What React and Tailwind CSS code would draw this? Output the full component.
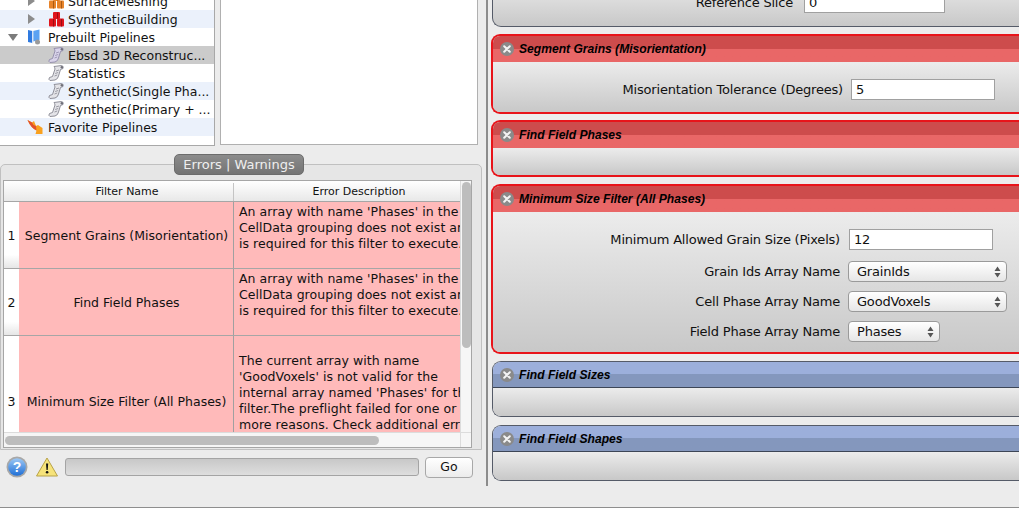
import React from 'react';

const ScrollIcon = ({ tint = '#e4e4e8', edge = '#85858f' }) => (
  <svg width="17" height="16" viewBox="0 0 17 16" className="shrink-0">
    <path d="M6 1.5 L13.5 0.5 Q16 1 15 3.5 L12.5 4.5 L10.5 11 Q10 14 7 15 L2 15.5 Q0 14.5 1.5 12.5 L4.5 11.5 L7 4 Q6.8 2.5 6 1.5Z" fill={tint} stroke={edge} strokeWidth="0.9" />
    <path d="M8 6 L11 5 M7.2 8.5 L10.2 7.5 M6.5 11 L9.2 10" stroke={edge} strokeWidth="0.8" />
    <circle cx="13.8" cy="2.2" r="1.2" fill="#6f6f78" />
  </svg>
);

const CubesIcon = ({ color, dark }) => (
  <svg width="15" height="15" viewBox="0 0 15 15" className="shrink-0">
    <rect x="4" y="0" width="7" height="7" rx="1" fill={color} />
    <rect x="0" y="6.5" width="7" height="8" rx="1" fill={color} />
    <rect x="8" y="6.5" width="7" height="8" rx="1" fill={color} />
    <path d="M4.5 7 V14.5 M12.5 7 V14.5 M8.5 0.5 V6.5" stroke={dark} strokeWidth="1" />
  </svg>
);

const PrebuiltIcon = () => (
  <svg width="15" height="16" viewBox="0 0 15 16" className="shrink-0">
    <path d="M1 1 L5.5 2 V14 L1 13Z" fill="#2f7ae0" />
    <path d="M6 2 L12.5 0.5 V11 L6 12.5Z" fill="#5ba2f2" />
    <path d="M5.8 2 V14.5" stroke="#e8eef8" strokeWidth="1.2" />
    <circle cx="10.5" cy="13" r="2.5" fill="#9a9a9a" />
  </svg>
);

const FavoriteIcon = () => (
  <svg width="16" height="16" viewBox="0 0 16 16" className="shrink-0">
    <path d="M0.5 1 L5 3.5 L7 2 L9 7 L11 6 L15.5 9 L15.5 15 L8.5 15 L9.5 11.5 Q4 9 0.5 1Z" fill="#f9a11f" />
    <path d="M0.5 1 L5 3.5 L6.5 6 L9 7 L9.5 11.5 Q4 9 0.5 1Z" fill="#e2502c" />
  </svg>
);

const TriRight = () => (
  <svg width="9" height="10" viewBox="0 0 9 10" className="shrink-0"><path d="M1 0 L8 5 L1 10Z" fill="#8c8c8c" /></svg>
);

const TriDown = () => (
  <svg width="10" height="9" viewBox="0 0 10 9" className="shrink-0"><path d="M0 1 H10 L5 8Z" fill="#7c7c7c" /></svg>
);

const TreeRow = ({ label, icon, indent = false, arrow, className = '' }) => (
  <div className={`h-[18px] flex items-center whitespace-nowrap ${className}`}>
    <div className={`flex items-center justify-center shrink-0 ${indent ? 'w-[46px] pl-[16px]' : 'w-[25px]'}`}>{arrow}</div>
    <div className={`flex justify-center shrink-0 ${indent ? 'w-[20px]' : 'w-[19px]'}`}>{icon}</div>
    <span className={`pt-[1px] ${indent ? 'ml-[2px]' : 'ml-[4px]'}`}>{label}</span>
  </div>
);

const CloseBadge = () => (
  <svg width="14" height="14" viewBox="0 0 14 14" className="shrink-0">
    <circle cx="7" cy="7" r="7" fill="#8a8a8a" />
    <path d="M4.2 4.2 L9.8 9.8 M9.8 4.2 L4.2 9.8" stroke="#f4f4f4" strokeWidth="2" strokeLinecap="round" />
  </svg>
);

const Panel = ({ title, error, children, className = '' }) => (
  <div className={`w-[560px] rounded-l-[9px] overflow-hidden flex flex-col ${error ? 'border-2 border-r-0 border-[#e8141a] -ml-[1px]' : 'border border-r-0 border-[#555b68]'} ${className}`}>
    <div className={`shrink-0 flex items-center pl-[7px] gap-[5px] bg-gradient-to-b ${error ? 'h-[26px] from-[#cd4c4c] from-50% to-[#e96767] to-50%' : 'h-[26px] pt-[1px] from-[#9cafdb] from-50% to-[#8497bd] to-50% border-b border-[#3d4656]'}`}>
      <CloseBadge />
      <span className="font-['Liberation_Sans',sans-serif] font-bold italic text-[12.1px] tracking-normal text-black -mt-[1px]">{title}</span>
    </div>
    <div className="flex-1 bg-gradient-to-b from-[#ececec] to-[#c8c8c8]">{children}</div>
  </div>
);

const FieldRow = ({ label, width, children, className = '' }) => (
  <div className={`flex items-center ${className}`}>
    <span className="text-right whitespace-nowrap shrink-0 mr-[8px]" style={{ width }}>{label}</span>
    {children}
  </div>
);

const TextBox = ({ value, className = '' }) => (
  <div className={`h-[21px] bg-white border border-[#a0a0a0] pl-[4px] flex items-center ${className}`}>{value}</div>
);

const SelectBox = ({ value, className = '' }) => (
  <div className={`h-[21px] rounded-[4px] border border-[#9a9a9a] bg-gradient-to-b from-[#ffffff] to-[#e6e6e6] pl-[8px] pr-[5px] flex items-center justify-between ${className}`}>
    <span>{value}</span>
    <svg width="7" height="12" viewBox="0 0 7 12"><path d="M3.5 0.5 L6.5 5 H0.5Z M3.5 11.5 L6.5 7 H0.5Z" fill="#555" /></svg>
  </div>
);

const errorRows = [
  {
    num: 1,
    name: 'Segment Grains (Misorientation)',
    height: 'h-[67px]',
    descPad: 'pb-[14px]',
    lines: ["An array with name 'Phases' in the", 'CellData grouping does not exist and', 'is required for this filter to execute.'],
  },
  {
    num: 2,
    name: 'Find Field Phases',
    height: 'h-[67px]',
    descPad: 'pb-[14px]',
    lines: ["An array with name 'Phases' in the", 'CellData grouping does not exist and', 'is required for this filter to execute.'],
  },
  {
    num: 3,
    name: 'Minimum Size Filter (All Phases)',
    height: 'h-[130px]',
    descPad: 'pb-[16px]',
    lines: [
      'The current array with name',
      "'GoodVoxels' is not valid for the",
      "internal array named 'Phases' for this",
      'filter.The preflight failed for one or',
      'more reasons. Check additional errors',
    ],
  },
];

export default function App() {
  return (
    <div className="w-[1019px] h-[508px] overflow-hidden bg-[#ececec] border-b border-[#8e8e8e] flex font-['DejaVu_Sans',sans-serif] text-[12.5px] leading-[16px] text-[#111]">
      {/* left side */}
      <div className="w-[486px] shrink-0 flex flex-col">
        <div className="flex h-[146px] shrink-0">
          <div className="w-[215px] h-[146px] bg-white border-r border-b border-[#a8a8a8] overflow-hidden">
            <div className="-mt-[8px]">
              <TreeRow indent arrow={<TriRight />} icon={<CubesIcon color="#e8842a" dark="#a85a14" />} label="SurfaceMeshing" />
              <TreeRow indent arrow={<TriRight />} icon={<CubesIcon color="#e0151c" dark="#9c0d12" />} label="SyntheticBuilding" className="bg-[#ebf1fb]" />
              <TreeRow arrow={<TriDown />} icon={<PrebuiltIcon />} label="Prebuilt Pipelines" />
              <TreeRow indent icon={<ScrollIcon tint="#d9d4ea" edge="#8f89a8" />} label="Ebsd 3D Reconstruc..." className="bg-[#cbcbcb]" />
              <TreeRow indent icon={<ScrollIcon />} label="Statistics" />
              <TreeRow indent icon={<ScrollIcon />} label="Synthetic(Single Pha..." className="bg-[#ebf1fb]" />
              <TreeRow indent icon={<ScrollIcon />} label="Synthetic(Primary + ..." />
              <TreeRow arrow={null} icon={<FavoriteIcon />} label="Favorite Pipelines" className="bg-[#ebf1fb]" />
            </div>
          </div>
          <div className="w-[258px] h-[145px] ml-[5px] bg-white border-x border-b border-[#b0b0b0]" />
        </div>

        {/* errors group */}
        <div className="relative mt-[18px] w-[482px] h-[286px] shrink-0 rounded-t-[5px] border border-[#c0c0c0] bg-[#e6e6e6] pt-[15px] pl-[2px]">
          <div className="absolute -top-[11px] left-[173px] w-[130px] h-[21px] rounded-[5px] border border-[#6c6c6c] bg-gradient-to-b from-[#8c8c8c] to-[#747474] text-[#efefef] text-[13px] flex items-center justify-center">
            Errors | Warnings
          </div>
          <div className="w-[469px] h-[268px] border border-[#a6a6a6] bg-white flex flex-col">
            <div className="flex flex-1 min-h-0">
              <div className="w-[457px] overflow-hidden">
                <div className="h-[21px] pt-[2px] flex text-[11px] bg-gradient-to-b from-white to-[#e8e8e8] border-b border-[#a6a6a6]">
                  <div className="w-[230px] flex items-center justify-center pl-[17px] border-r border-[#c4c4c4]">Filter Name</div>
                  <div className="flex-1 flex items-center justify-center pl-[24px]">Error Description</div>
                </div>
                {errorRows.map((row) => (
                  <div key={row.num} className={`flex border-b border-[#a6a6a6] ${row.height}`}>
                    <div className="w-[15px] shrink-0 pt-[2px] flex items-center justify-center bg-gradient-to-b from-white from-80% to-[#e6e6e6]">{row.num}</div>
                    <div className="w-[215px] shrink-0 pt-[2px] pl-[1px] bg-[#ffbaba] border-r border-[#a0a0a0] flex items-center justify-center whitespace-nowrap">{row.name}</div>
                    <div className={`w-[227px] shrink-0 bg-[#ffbaba] pl-[5px] flex flex-col justify-center whitespace-nowrap overflow-hidden tracking-[0.05px] ${row.descPad}`}>
                      {row.lines.map((line) => (
                        <span key={line}>{line}</span>
                      ))}
                    </div>
                  </div>
                ))}
              </div>
              <div className="w-[11px] bg-[#f6f6f6] border-l border-[#dcdcdc] flex justify-center pt-[1px]">
                <div className="w-[9px] h-[166px] rounded-full bg-[#bdbdbd]" />
              </div>
            </div>
            <div className="h-[15px] shrink-0 flex bg-[#f6f6f6] border-t border-[#dcdcdc]">
              <div className="w-[457px] pt-[3px] pl-[1px] border-r border-[#dcdcdc]">
                <div className="w-[374px] h-[9px] rounded-full bg-[#bdbdbd]" />
              </div>
            </div>
          </div>
        </div>

        {/* status row */}
        <div className="flex items-center h-[22px] mt-[6px] pl-[6px] shrink-0">
          <svg width="22" height="22" viewBox="0 0 22 22" className="shrink-0">
            <defs>
              <linearGradient id="helpBlue" x1="0" y1="0" x2="0" y2="1">
                <stop offset="0" stopColor="#9cc8f5" />
                <stop offset="1" stopColor="#1f6fd6" />
              </linearGradient>
            </defs>
            <circle cx="11" cy="11" r="10.5" fill="#a8a8a8" />
            <circle cx="11" cy="11" r="8.8" fill="url(#helpBlue)" />
            <text x="11" y="16" textAnchor="middle" fontSize="14" fontWeight="700" fill="#fff" fontFamily="Liberation Sans, sans-serif">?</text>
          </svg>
          <svg width="22" height="20" viewBox="0 0 22 20" className="ml-[8px] shrink-0">
            <path d="M11 1 L21.5 19 H0.5Z" fill="#f6e37a" stroke="#b8a248" strokeWidth="1" strokeLinejoin="round" />
            <path d="M10 6.5 H12.2 L11.7 13 H10.5Z" fill="#111" />
            <circle cx="11.1" cy="15.3" r="1.3" fill="#111" />
          </svg>
          <div className="ml-[7px] w-[354px] h-[18px] rounded-[3px] border border-[#a4a4a4] bg-gradient-to-b from-[#c8c8c8] to-[#dedede]" />
          <div className="ml-[6px] w-[48px] h-[21px] rounded-[4px] border border-[#a8a8a8] bg-gradient-to-b from-white to-[#ececec] flex items-center justify-center">Go</div>
        </div>
      </div>

      {/* splitter + filter pipeline */}
      <div className="w-[533px] h-[486px] shrink-0 border-l-[2px] border-[#8c8c8c] pl-[4px] overflow-hidden text-[13px] tracking-[-0.2px]">
        <div className="flex flex-col">
          <div className="w-[560px] h-[27px] rounded-bl-[9px] border border-t-0 border-r-0 border-[#555b68] bg-gradient-to-b from-[#dcdcdc] to-[#c8c8c8] flex items-center">
            <FieldRow label="Reference Slice" width={300} className="-mt-[20px]">
              <div className="h-[20px] w-[141px] ml-[3px] bg-white border border-[#a0a0a0] pl-[4px] flex items-center">0</div>
            </FieldRow>
          </div>

          <Panel error title="Segment Grains (Misorientation)" className="h-[80px] mt-[7px]">
            <FieldRow label="Misorientation Tolerance (Degrees)" width={350} className="pt-[17px]">
              <TextBox value="5" className="w-[144px]" />
            </FieldRow>
          </Panel>

          <Panel error title="Find Field Phases" className="h-[57px] mt-[6px]" />

          <Panel error title="Minimum Size Filter (All Phases)" className="h-[170px] mt-[7px]">
            <FieldRow label="Minimum Allowed Grain Size (Pixels)" width={347} className="pt-[17px]">
              <TextBox value="12" className="w-[144px] ml-[1px]" />
            </FieldRow>
            <FieldRow label="Grain Ids Array Name" width={347} className="mt-[11px]">
              <SelectBox value="GrainIds" className="w-[159px]" />
            </FieldRow>
            <FieldRow label="Cell Phase Array Name" width={347} className="mt-[9px]">
              <SelectBox value="GoodVoxels" className="w-[159px]" />
            </FieldRow>
            <FieldRow label="Field Phase Array Name" width={347} className="mt-[9px]">
              <SelectBox value="Phases" className="w-[92px]" />
            </FieldRow>
          </Panel>

          <Panel title="Find Field Sizes" className="h-[56px] mt-[7px]" />
          <Panel title="Find Field Shapes" className="h-[56px] mt-[8px]" />
        </div>
      </div>
    </div>
  );
}
